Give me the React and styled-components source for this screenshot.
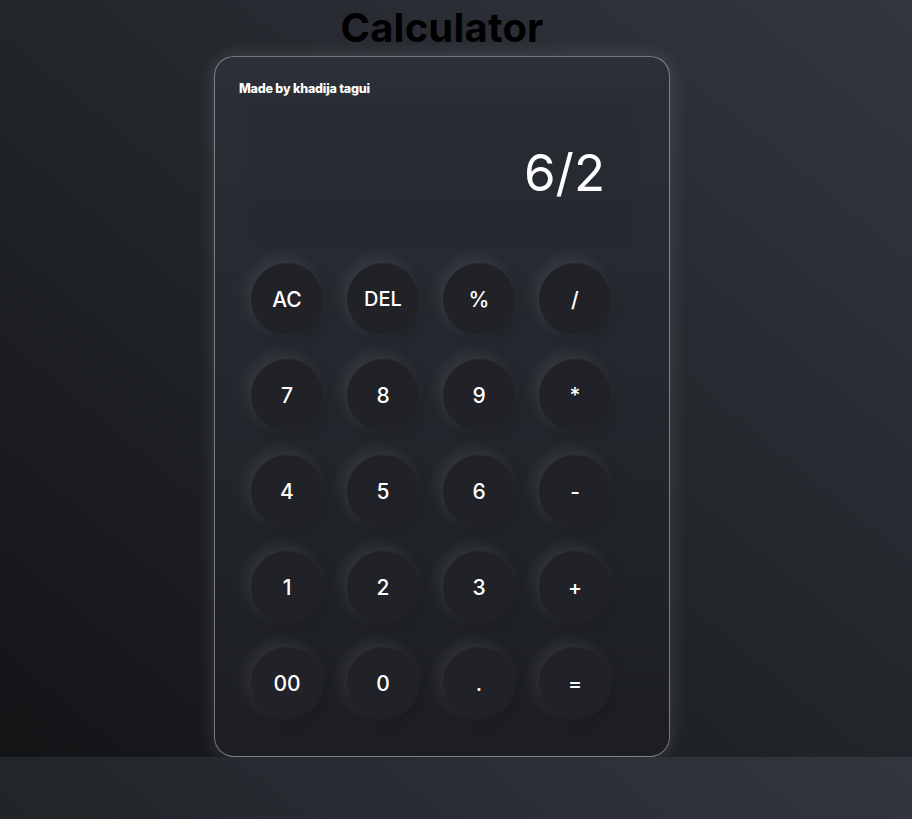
import React from "react";
import styled, { createGlobalStyle } from "styled-components";

const GlobalStyle = createGlobalStyle`
  body {
    margin: 0;
    background: linear-gradient(to top right, #131416, #32373f);
    font-family: "Inter", "Liberation Sans", sans-serif;
  }
`;

const Page = styled.div`
  display: flex;
  flex-direction: column;
  align-items: center;
  padding-right: 28px;
`;

const Title = styled.h1`
  margin: 0;
  font-size: 40px;
  line-height: 56px;
  font-weight: 700;
  color: #000000;
  letter-spacing: 0.2px;
`;

const Card = styled.div`
  box-sizing: border-box;
  width: 456px;
  padding: 24px 24px 37px;
  border: 1px solid rgba(255, 255, 255, 0.4);
  border-radius: 20px;
  background: linear-gradient(to bottom, #2b2f37, #1c1e22);
  box-shadow: 0 0 18px rgba(255, 255, 255, 0.14);
`;

const Credit = styled.div`
  font-size: 12.5px;
  line-height: 16px;
  font-weight: 800;
  color: #ffffff;
  letter-spacing: -0.2px;
`;

const Display = styled.div`
  display: flex;
  align-items: center;
  justify-content: flex-end;
  height: 135px;
  margin: 8px 12px 0;
  padding-right: 28px;
  background: rgba(0, 0, 0, 0.04);
  box-shadow: 0 0 6px rgba(0, 0, 0, 0.1);
  font-size: 51px;
  font-weight: 400;
  color: #ffffff;
`;

const Keys = styled.div`
  display: grid;
  grid-template-columns: repeat(4, 72px);
  grid-auto-rows: 72px;
  gap: 24px;
  margin: 23px 12px 0;
`;

const Key = styled.button`
  display: flex;
  align-items: center;
  justify-content: center;
  width: 72px;
  height: 72px;
  padding: 0;
  border: none;
  border-radius: 50%;
  background: #202228;
  box-shadow: -5px -5px 15px rgba(255, 255, 255, 0.09),
    5px 5px 15px rgba(0, 0, 0, 0.12);
  color: #ffffff;
  font-family: inherit;
  font-size: ${(p) => (p.$small ? "20px" : "21px")};
  font-weight: 500;
  cursor: pointer;
`;

const keys = [
  "AC", "DEL", "%", "/",
  "7", "8", "9", "*",
  "4", "5", "6", "-",
  "1", "2", "3", "+",
  "00", "0", ".", "=",
];

export default function App() {
  return (
    <>
      <GlobalStyle />
      <Page>
        <Title>Calculator</Title>
        <Card>
          <Credit>Made by khadija tagui</Credit>
          <Display>6/2</Display>
          <Keys>
            {keys.map((k) => (
              <Key key={k} $small={k.length > 2}>
                {k}
              </Key>
            ))}
          </Keys>
        </Card>
      </Page>
    </>
  );
}
